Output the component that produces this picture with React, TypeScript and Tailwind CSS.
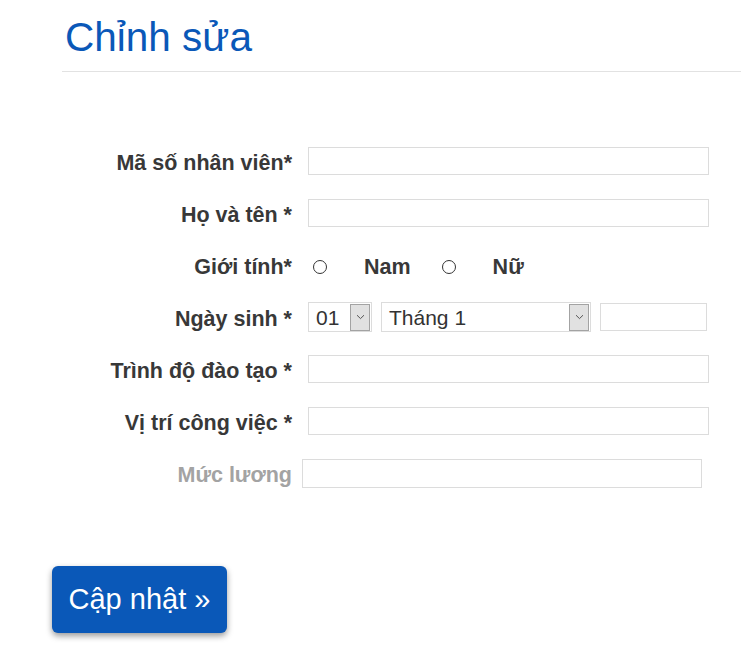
import React from 'react';

const font = "[font-family:'Liberation_Sans',Arial,sans-serif]";

const Chevron = () => (
  <svg width="9" height="6" viewBox="0 0 9 6" fill="none">
    <path d="M1 1.2L4.5 4.6L8 1.2" stroke="#555" strokeWidth="1" />
  </svg>
);

const FakeSelect = ({ value, width }: { value: string; width: string }) => (
  <div className={`${width} h-[30px] border border-[#dcdcdc] bg-white flex items-center justify-between pl-[7px] pr-px`}>
    <span className={`pt-[2px] text-[21px] text-[#333] ${font}`}>{value}</span>
    <div className="w-[20px] h-[27px] bg-[#e1e1e1] border border-[#a3a3a3] flex items-center justify-center">
      <Chevron />
    </div>
  </div>
);

const Row = ({ label, children, muted }: { label: string; children: React.ReactNode; muted?: boolean }) => (
  <div className="h-[52px] flex items-center">
    <label
      className={`w-[292px] pt-[4px] text-right text-[21.5px] font-bold ${muted ? 'text-[#a3a3a3]' : 'text-[#383838]'} ${font}`}
    >
      {label}
    </label>
    {children}
  </div>
);

const Radio = () => (
  <div className="w-[14px] h-[14px] rounded-full border border-[#333] bg-white" />
);

export default function App() {
  return (
    <div className={`w-[741px] h-[669px] bg-white ${font}`}>
      <div className="pl-[62px]">
        <h1 className={`pl-[3px] pt-[13px] text-[40.5px] leading-[48px] text-[#0a58b8] ${font}`}>Chỉnh sửa</h1>
        <div className="mt-[10px] border-t border-[#e2e2e2]" />
      </div>

      <div className="pt-[63px]">
        <Row label="Mã số nhân viên*">
          <input className="ml-[16px] w-[401px] h-[28px] border border-[#dcdcdc] outline-none" />
        </Row>
        <Row label="Họ và tên *">
          <input className="ml-[16px] w-[401px] h-[28px] border border-[#dcdcdc] outline-none" />
        </Row>
        <Row label="Giới tính*">
          <div className="ml-[21px] pt-[4px] flex items-center">
            <Radio />
            <span className={`ml-[37px] text-[21.5px] font-bold text-[#383838] ${font}`}>Nam</span>
            <div className="ml-[31px]">
              <Radio />
            </div>
            <span className={`ml-[37px] text-[21.5px] font-bold text-[#383838] ${font}`}>Nữ</span>
          </div>
        </Row>
        <Row label="Ngày sinh *">
          <div className="ml-[16px] flex items-center gap-[9px]">
            <FakeSelect value="01" width="w-[64px]" />
            <FakeSelect value="Tháng 1" width="w-[210px]" />
            <input className="w-[107px] h-[28px] border border-[#dcdcdc] outline-none" />
          </div>
        </Row>
        <Row label="Trình độ đào tạo *">
          <input className="ml-[16px] w-[401px] h-[28px] border border-[#dcdcdc] outline-none" />
        </Row>
        <Row label="Vị trí công việc *">
          <input className="ml-[16px] w-[401px] h-[28px] border border-[#dcdcdc] outline-none" />
        </Row>
        <Row label="Mức lương" muted>
          <input className="ml-[10px] w-[400px] h-[29px] border border-[#dcdcdc] outline-none" />
        </Row>
      </div>

      <div className="pl-[52px] pt-[67px]">
        <button
          className={`w-[175px] h-[67px] rounded-[6px] bg-[#0a58b8] text-white text-[29px] shadow-[0_3px_6px_rgba(0,0,0,0.4)] ${font}`}
        >
          Cập nhật »
        </button>
      </div>
    </div>
  );
}
